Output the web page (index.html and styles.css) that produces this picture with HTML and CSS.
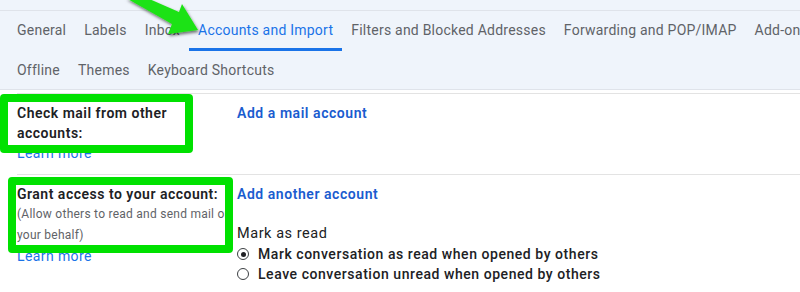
FILE: index.html
```html
<!DOCTYPE html>
<html lang="en">
<head>
    <meta charset="UTF-8">
    <title>Settings - Accounts and Import</title>
    <link rel="stylesheet" href="styles.css">
</head>
<body>
    <div class="topbar"></div>

    <nav class="tabs">
        <div class="tab-row">
            <a class="tab">General</a>
            <a class="tab">Labels</a>
            <a class="tab">Inbox</a>
            <a class="tab active">Accounts and Import</a>
            <a class="tab">Filters and Blocked Addresses</a>
            <a class="tab">Forwarding and POP/IMAP</a>
            <a class="tab">Add-ons</a>
        </div>
        <div class="tab-row tab-row-second">
            <a class="tab">Offline</a>
            <a class="tab">Themes</a>
            <a class="tab">Keyboard Shortcuts</a>
        </div>
    </nav>

    <div class="settings">
        <div class="setting-row">
            <div class="setting-label">
                <div class="label-title">Check mail from other accounts:</div>
                <a class="learn-more">Learn more</a>
            </div>
            <div class="setting-value">
                <a class="action">Add a mail account</a>
            </div>
        </div>

        <div class="setting-row">
            <div class="setting-label">
                <div class="label-title">Grant access to your account:</div>
                <div class="label-note">(Allow others to read and send mail on your behalf)</div>
                <a class="learn-more">Learn more</a>
            </div>
            <div class="setting-value">
                <a class="action">Add another account</a>
                <div class="option-title">Mark as read</div>
                <label class="radio-line"><span class="radio checked"></span>Mark conversation as read when opened by others</label>
                <label class="radio-line"><span class="radio"></span>Leave conversation unread when opened by others</label>
            </div>
        </div>
    </div>

    <!-- annotations drawn over the screenshot -->
    <div class="highlight highlight-check"></div>
    <div class="highlight highlight-grant"></div>
    <svg class="arrow" width="100" height="45" viewBox="110 0 100 45">
        <defs>
            <filter id="shadow" x="-20%" y="-20%" width="150%" height="160%">
                <feDropShadow dx="1" dy="2" stdDeviation="1.4" flood-color="#000" flood-opacity="0.55"/>
            </filter>
        </defs>
        <polygon filter="url(#shadow)" fill="#1fe214"
            points="126,-2 147,-2 179,12 182,4 198,30 168,34 172,24"/>
    </svg>
</body>
</html>
```

FILE: styles.css
```css
body {
    margin: 0;
    font-family: Roboto, "Liberation Sans", sans-serif;
    background: #fff;
    color: #202124;
    overflow: hidden;
}

.topbar {
    height: 10px;
    background: #eff4fb;
    border-bottom: 1px solid #dfe3ea;
}

.tabs {
    background: #eff4fb;
    border-bottom: 1px solid #dfe3ea;
    padding-left: 8px;
}

.tab-row {
    display: flex;
    white-space: nowrap;
    overflow: hidden;
}

.tab {
    display: flex;
    align-items: center;
    height: 40px;
    box-sizing: border-box;
    padding: 0 9px;
    border-bottom: 3px solid transparent;
    font-size: 14px;
    letter-spacing: 0.23px;
    color: #5f6368;
}

.tab.active {
    color: #1a73e8;
    border-bottom-color: #1a73e8;
}

.tab-row-second .tab {
    height: 38px;
    border-bottom: 0;
}

.settings {
    margin-top: 3px;
    padding-left: 17px;
}

.setting-row {
    display: flex;
    border-top: 1px solid #e3e3e3;
    padding: 9px 0 11px;
}

.setting-label {
    width: 217px;
    padding-right: 3px;
    flex-shrink: 0;
}

.label-title {
    font-size: 14px;
    line-height: 20px;
    font-weight: 600;
    letter-spacing: 0.5px;
    color: #202124;
}

.label-note {
    font-size: 12px;
    line-height: 21px;
    letter-spacing: 0.25px;
    color: #5f6368;
}

.learn-more {
    display: block;
    font-size: 14px;
    line-height: 20px;
    letter-spacing: 0.4px;
    color: #1a73e8;
}

.setting-value {
    font-size: 14px;
    line-height: 20px;
    letter-spacing: 0.55px;
}

.action {
    display: block;
    font-weight: 600;
    color: #1a5ccf;
}

.option-title {
    margin-top: 20px;
    font-size: 14.5px;
}

.radio-line {
    display: flex;
    align-items: center;
    font-weight: 500;
}

.radio {
    position: relative;
    width: 10px;
    height: 10px;
    border: 1.2px solid #3c4043;
    border-radius: 50%;
    margin-right: 9px;
    flex-shrink: 0;
}

.radio.checked::after {
    content: "";
    position: absolute;
    left: 2.5px;
    top: 2.5px;
    width: 5px;
    height: 5px;
    border-radius: 50%;
    background: #202124;
}

.highlight {
    position: absolute;
    box-sizing: border-box;
    border: 8px solid #00e100;
    border-radius: 4px;
}

.highlight-check {
    left: 0;
    top: 94px;
    width: 193px;
    height: 59px;
}

.highlight-grant {
    left: 8px;
    top: 177px;
    width: 225px;
    height: 76px;
}

.arrow {
    position: absolute;
    left: 110px;
    top: 0;
    overflow: visible;
}
```
